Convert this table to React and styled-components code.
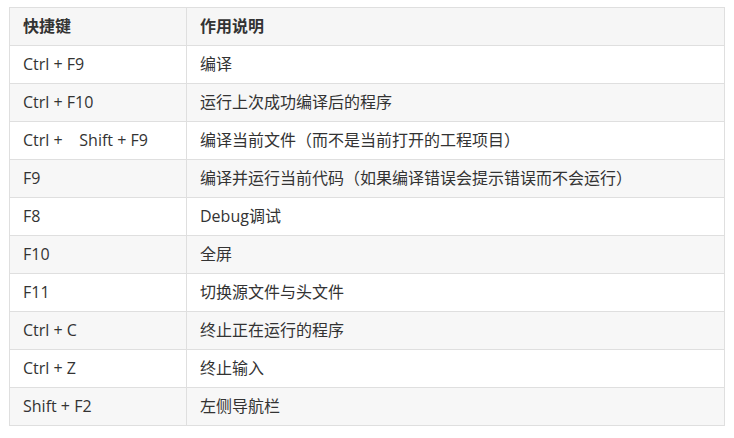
import React from 'react';
import styled, {createGlobalStyle} from "styled-components";

const GlobalStyle = createGlobalStyle`
  body {
    margin: 0;
    background: #fff;
    font-family: "Open Sans", "Noto Sans CJK SC", sans-serif;
  }
`;

const Page = styled.div`
  padding: 7px 9px;
`;

const Table = styled.table`
  width: 716px;
  border-collapse: collapse;
  font-size: 16px;
  color: #333;
  th, td {
    border: 1px solid #dfdfdf;
    height: 37px;
    padding: 0 13px;
    text-align: left;
    vertical-align: middle;
    white-space: pre;
    line-height: 1.2;
  }
  th {
    font-weight: 700;
    background: #f6f6f6;
  }
  th:first-child, td:first-child {
    width: 150px;
  }
`;

const Row = styled.tr`
  background: ${p => p.$striped ? '#f7f7f7' : '#fff'};
`;

const rows = [
  ['Ctrl + F9', '编译'],
  ['Ctrl + F10', '运行上次成功编译后的程序'],
  ['Ctrl +    Shift + F9', '编译当前文件（而不是当前打开的工程项目）'],
  ['F9', '编译并运行当前代码（如果编译错误会提示错误而不会运行）'],
  ['F8', 'Debug调试'],
  ['F10', '全屏'],
  ['F11', '切换源文件与头文件'],
  ['Ctrl + C', '终止正在运行的程序'],
  ['Ctrl + Z', '终止输入'],
  ['Shift + F2', '左侧导航栏'],
];

const App = () => {
  return (
      <Page>
        <GlobalStyle/>
        <Table>
          <thead>
          <tr>
            <th>快捷键</th>
            <th>作用说明</th>
          </tr>
          </thead>
          <tbody>
          {rows.map(([key, desc], i) => (
              <Row key={key} $striped={i % 2 === 1}>
                <td>{key}</td>
                <td>{desc}</td>
              </Row>
          ))}
          </tbody>
        </Table>
      </Page>
  );
};

export default App;
